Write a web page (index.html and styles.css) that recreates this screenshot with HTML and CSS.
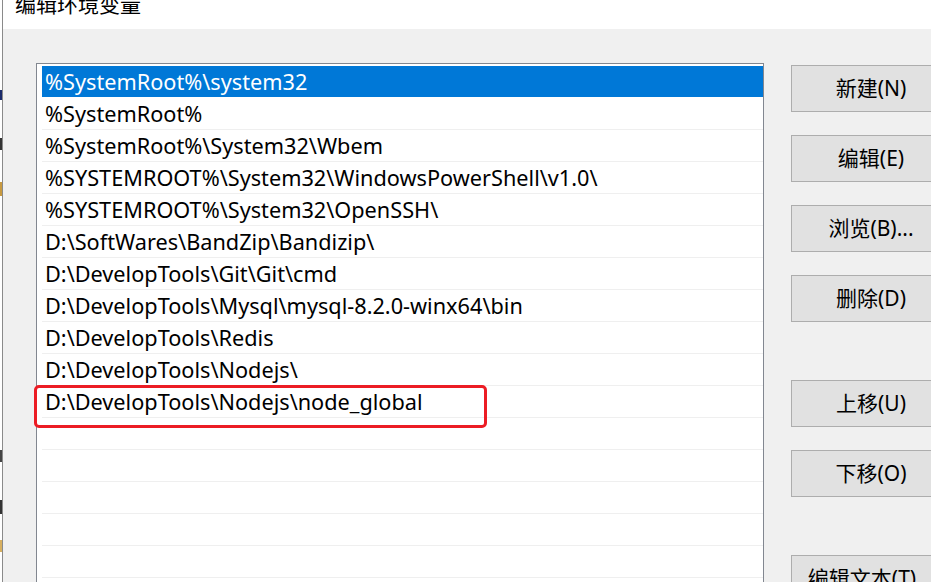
FILE: index.html
```html
<!DOCTYPE html>
<html lang="zh-CN">
<head>
<meta charset="utf-8">
<title>编辑环境变量</title>
<link rel="stylesheet" href="styles.css">
</head>
<body>
<div class="desk">
  <div class="behind"></div>
  <div class="dialog">
    <div class="titlebar"><span class="title">编辑环境变量</span></div>
    <div class="content">
      <div class="listbox">
        <div class="row selected">%SystemRoot%\system32</div>
        <div class="row">%SystemRoot%</div>
        <div class="row">%SystemRoot%\System32\Wbem</div>
        <div class="row">%SYSTEMROOT%\System32\WindowsPowerShell\v1.0\</div>
        <div class="row">%SYSTEMROOT%\System32\OpenSSH\</div>
        <div class="row">D:\SoftWares\BandZip\Bandizip\</div>
        <div class="row">D:\DevelopTools\Git\Git\cmd</div>
        <div class="row">D:\DevelopTools\Mysql\mysql-8.2.0-winx64\bin</div>
        <div class="row">D:\DevelopTools\Redis</div>
        <div class="row">D:\DevelopTools\Nodejs\</div>
        <div class="row">D:\DevelopTools\Nodejs\node_global</div>
        <div class="row"></div>
        <div class="row"></div>
        <div class="row"></div>
        <div class="row"></div>
        <div class="row"></div>
      </div>
      <div class="buttons">
        <div class="btn">新建(N)</div>
        <div class="btn">编辑(E)</div>
        <div class="btn">浏览(B)...</div>
        <div class="btn">删除(D)</div>
        <div class="btn gap">上移(U)</div>
        <div class="btn">下移(O)</div>
        <div class="btn gap wide">编辑文本(T)</div>
      </div>
    </div>
  </div>
  <div class="highlight"></div>
</div>
</body>
</html>
```
FILE: styles.css
```css
html, body {
  margin: 0;
  padding: 0;
  width: 931px;
  height: 582px;
  overflow: hidden;
  background: #f0f0f0;
}
.desk {
  position: relative;
  display: flex;
  width: 931px;
  height: 582px;
  overflow: hidden;
  font-family: "Noto Sans", "Noto Sans CJK SC", sans-serif;
}
.behind {
  flex: 0 0 2px;
  background: linear-gradient(to bottom,
    #ffffff 0, #ffffff 90px, #1a2a6a 90px, #1a2a6a 100px,
    #ffffff 100px, #ffffff 138px, #333 138px, #333 150px,
    #ffffff 150px, #ffffff 182px, #c89a40 182px, #c89a40 196px,
    #ffffff 196px, #ffffff 450px, #444 450px, #444 462px,
    #ffffff 462px, #ffffff 500px, #333 500px, #333 514px,
    #ffffff 514px, #ffffff 540px, #d8b060 540px, #d8b060 552px,
    #ffffff 552px);
  border-right: 1px solid #8a8a8a;
}
.dialog {
  flex: 1;
  display: flex;
  flex-direction: column;
  min-width: 0;
}
.titlebar {
  height: 29px;
  flex: 0 0 29px;
  background: #ffffff;
  overflow: hidden;
  padding-left: 12px;
}
.title {
  display: block;
  margin-top: -8px;
  font-family: "Noto Sans CJK SC", sans-serif;
  font-size: 21px;
  line-height: 22px;
  color: #000;
}
.content {
  flex: 1;
  display: flex;
  align-items: flex-start;
  padding-left: 33px;
  min-height: 0;
}
.listbox {
  margin-top: 34px;
  width: 721px;
  height: 560px;
  flex: 0 0 721px;
  background: #ffffff;
  border: 1px solid #828790;
  padding: 2px 0 0 5px;
  box-sizing: content-box;
}
.row {
  height: 31px;
  border-bottom: 1px solid #efefef;
  padding-left: 3px;
  font-size: 21.7px;
  line-height: 31px;
  color: #000;
  white-space: nowrap;
  overflow: hidden;
}
.row.selected {
  background: #0078d7;
  color: #ffffff;
  border-bottom-color: #ffffff;
}
.buttons {
  margin-left: 27px;
  margin-top: 36px;
  display: flex;
  flex-direction: column;
  gap: 23px;
}
.btn {
  width: 158px;
  height: 45px;
  flex: 0 0 45px;
  background: #e1e1e1;
  border: 1px solid #adadad;
  font-family: "Noto Sans", "Noto Sans CJK SC", sans-serif;
  font-size: 21px;
  line-height: 45px;
  text-align: center;
  color: #000;
  white-space: nowrap;
}
.btn.gap {
  margin-top: 35px;
}
.btn.wide {
  width: 140px;
  padding-right: 18px;
}
.highlight {
  position: absolute;
  left: 34px;
  top: 385px;
  width: 447px;
  height: 37px;
  border: 3px solid #ec1c24;
  border-radius: 5px;
}
```
